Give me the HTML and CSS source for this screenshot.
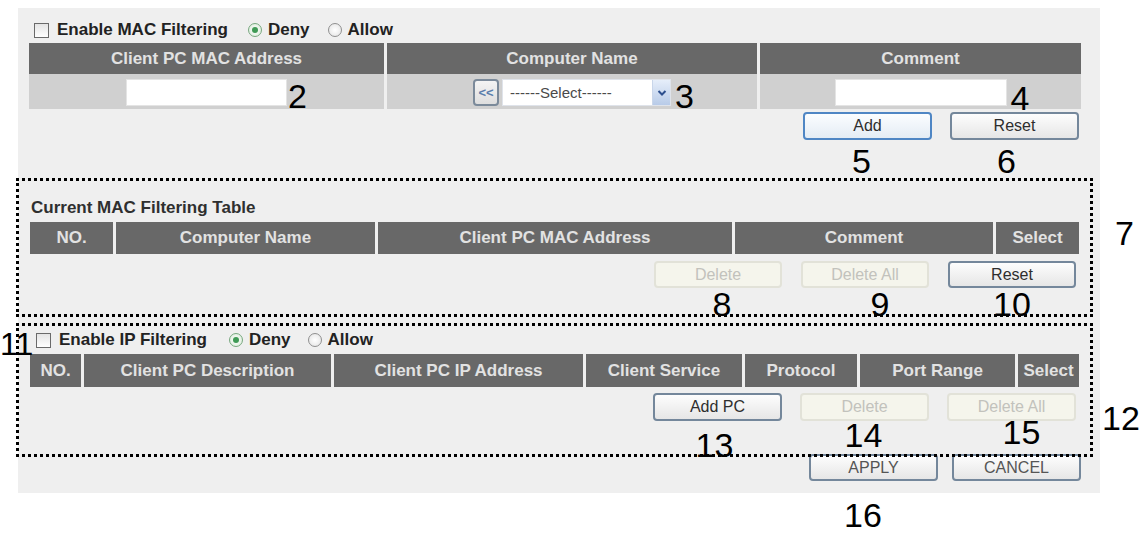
FILE: index.html
```html
<!DOCTYPE html>
<html lang="en">
<head>
    <meta charset="UTF-8">
    <meta name="viewport" content="width=device-width, initial-scale=1.0">
    <title>MAC / IP Filtering</title>
    <link rel="stylesheet" href="styles.css">
</head>
<body>

    <div class="panel">

        <!-- MAC filtering form -->
        <div class="filter-row">
            <span class="check"></span>
            <span class="label">Enable MAC Filtering</span>
            <span class="option"><span class="radio on"></span>Deny</span>
            <span class="option"><span class="radio"></span>Allow</span>
        </div>

        <div class="grid mac-cols head">
            <div>Client PC MAC Address</div>
            <div>Computer Name</div>
            <div>Comment</div>
        </div>
        <div class="grid mac-cols data">
            <div class="cell">
                <span class="field"><input type="text" class="txt mac-input"><span class="mark side">2</span></span>
            </div>
            <div class="cell">
                <span class="field">
                    <button class="copy-btn">&lt;&lt;</button>
                    <span class="select">
                        <span class="select-text">------Select------</span>
                        <span class="select-arrow">
                            <svg width="10" height="8" viewBox="0 0 10 8"><path d="M1.5 2 L5 5.5 L8.5 2" fill="none" stroke="#2d4f8e" stroke-width="2"/></svg>
                        </span>
                    </span>
                    <span class="mark side s3">3</span>
                </span>
            </div>
            <div class="cell">
                <span class="field"><input type="text" class="txt comment-input"><span class="mark side s4">4</span></span>
            </div>
        </div>

        <div class="btn-row add-row">
            <span class="btn-wrap"><button class="btn focus">Add</button><span class="mark below m5">5</span></span>
            <span class="btn-wrap"><button class="btn">Reset</button><span class="mark below m6">6</span></span>
        </div>

        <!-- current MAC table -->
        <div class="box mac-box">
            <span class="mark box-mark m7">7</span>
            <div class="box-title">Current MAC Filtering Table</div>
            <div class="grid list-cols head">
                <div>NO.</div>
                <div>Computer Name</div>
                <div>Client PC MAC Address</div>
                <div>Comment</div>
                <div>Select</div>
            </div>
            <div class="btn-row list-btns">
                <span class="btn-wrap"><button class="btn" disabled>Delete</button><span class="mark below m8">8</span></span>
                <span class="btn-wrap"><button class="btn" disabled>Delete All</button><span class="mark below m9">9</span></span>
                <span class="btn-wrap"><button class="btn">Reset</button><span class="mark below m10">10</span></span>
            </div>
        </div>

        <!-- IP filtering -->
        <div class="box ip-box">
            <span class="mark box-mark m11">11</span>
            <span class="mark box-mark m12">12</span>
            <div class="filter-row ip-row">
                <span class="check"></span>
                <span class="label">Enable IP Filtering</span>
                <span class="option"><span class="radio on"></span>Deny</span>
                <span class="option"><span class="radio"></span>Allow</span>
            </div>
            <div class="grid ip-cols head tall">
                <div>NO.</div>
                <div>Client PC Description</div>
                <div>Client PC IP Address</div>
                <div>Client Service</div>
                <div>Protocol</div>
                <div>Port Range</div>
                <div>Select</div>
            </div>
            <div class="btn-row ip-btns">
                <span class="btn-wrap"><button class="btn">Add PC</button><span class="mark below m13">13</span></span>
                <span class="btn-wrap"><button class="btn" disabled>Delete</button><span class="mark below m14">14</span></span>
                <span class="btn-wrap"><button class="btn" disabled>Delete All</button><span class="mark below m15">15</span></span>
            </div>
        </div>

        <div class="btn-row final-row">
            <span class="btn-wrap"><button class="btn caps">APPLY</button></span>
            <span class="btn-wrap"><button class="btn caps">CANCEL</button></span>
        </div>

    </div>

    <div class="footer-mark">16</div>

</body>
</html>
```

FILE: styles.css
```css
body {
    margin: 0;
    background-color: #fff;
    font-family: "Liberation Sans", Arial, sans-serif;
}
.panel {
    margin: 8px 0 0 18px;
    width: 1082px;
    height: 485px;
    box-sizing: border-box;
    padding: 12px 0 0 11px;
    background-color: #efefef;
}

/* enable + deny/allow line */
.filter-row {
    display: flex;
    align-items: center;
    height: 20px;
    margin: 0 0 3px 5px;
    font-size: 17px;
    font-weight: bold;
    color: #222;
}
.check {
    width: 13px;
    height: 13px;
    border: 1px solid #6a6a6a;
    background: linear-gradient(#e4e4e4, #fff);
    margin-right: 8px;
}
.option {
    display: flex;
    align-items: center;
    margin-left: 20px;
}
.option + .option {
    margin-left: 18px;
}
.radio {
    position: relative;
    width: 12px;
    height: 12px;
    border: 1px solid #8f8f8f;
    border-radius: 50%;
    background: radial-gradient(#fff, #e2e2e2);
    margin-right: 6px;
}
.radio.on {
    border-color: #78a87f;
    background: radial-gradient(#fff, #d8ead8);
}
.radio.on::after {
    content: "";
    position: absolute;
    left: 3px;
    top: 3px;
    width: 6px;
    height: 6px;
    border-radius: 50%;
    background-color: #3f9a55;
}

/* table grids */
.grid {
    display: grid;
    column-gap: 3px;
    width: 1052px;
}
.mac-cols {
    grid-template-columns: 355px 370px 321px;
}
.list-cols {
    width: 1049px;
    grid-template-columns: 83px 259px 354px 258px 83px;
}
.ip-cols {
    width: 1049px;
    grid-template-columns: 51px 247px 249px 156px 112px 155px 61px;
}
.head div {
    height: 31px;
    line-height: 31px;
    background-color: #686868;
    color: #e2e2e2;
    font-size: 17px;
    font-weight: bold;
    text-align: center;
    white-space: nowrap;
}
.list-cols.head div {
    height: 32px;
    line-height: 32px;
}
.head.tall div {
    height: 33px;
    line-height: 33px;
}
.data .cell {
    height: 35px;
    background-color: #d0d0d0;
    display: flex;
    justify-content: center;
    align-items: center;
}
.field {
    position: relative;
    display: flex;
    align-items: center;
    margin-top: 2px;
}
.txt {
    box-sizing: border-box;
    height: 27px;
    border: 1px solid #e4e4e4;
    background-color: #fff;
    padding: 0;
}
.mac-input {
    width: 161px;
}
.comment-input {
    width: 172px;
}
.copy-btn {
    box-sizing: border-box;
    width: 26px;
    height: 27px;
    margin-right: 3px;
    padding: 0;
    border: 2px solid #7b8a9a;
    border-radius: 4px;
    background: linear-gradient(#f4f4f4, #dedede);
    color: #5a7eac;
    font-family: "Liberation Sans", Arial, sans-serif;
    font-size: 13px;
    font-weight: bold;
}
.select {
    box-sizing: border-box;
    display: flex;
    width: 169px;
    height: 27px;
    border: 1px solid #dfe3ea;
    background-color: #fff;
}
.select-text {
    flex: 1;
    padding-left: 7px;
    line-height: 25px;
    font-size: 15px;
    color: #4a4a4a;
}
.select-arrow {
    width: 17px;
    display: flex;
    align-items: center;
    justify-content: center;
    background: linear-gradient(#e6eefa, #b8cbe8);
    border-left: 1px solid #c9d6ea;
}

/* buttons */
.btn-row {
    display: flex;
    justify-content: flex-end;
}
.add-row {
    width: 1050px;
    margin-top: 3px;
    gap: 18px;
}
.btn-wrap {
    position: relative;
    display: flex;
}
.btn {
    box-sizing: border-box;
    width: 129px;
    height: 28px;
    padding: 0;
    border: 2px solid #74879b;
    border-radius: 4px;
    background: linear-gradient(#fdfdfd, #e6e6e6);
    color: #2e2e2e;
    font-family: "Liberation Sans", Arial, sans-serif;
    font-size: 16px;
}
.btn.focus {
    border-color: #4f86c4;
    background: linear-gradient(#fbfdff, #e4ecf4);
}
.btn:disabled {
    border-color: #e2e2d8;
    background: #f5f5ec;
    color: #c2c2bc;
}
.btn.caps {
    height: 27px;
    color: #555;
}

/* dotted boxes */
.box {
    position: relative;
    box-sizing: border-box;
    width: 1077px;
    margin-left: -13px;
    border: 3px dotted #000;
}
.mac-box {
    margin-top: 38px;
    padding: 17px 0 26px 11px;
}
.ip-box {
    z-index: 1;
    margin-top: 6px;
    padding: 4px 0 33px 11px;
}
.box-title {
    height: 20px;
    line-height: 20px;
    margin: 0 0 4px 1px;
    font-size: 17px;
    font-weight: bold;
    color: #2f2f2f;
}
.list-btns {
    width: 1046px;
    margin-top: 7px;
    gap: 19px;
}
.list-btns .btn {
    width: 128px;
    height: 27px;
}
.ip-row {
    margin: 0 0 4px 6px;
}
.ip-row .option {
    margin-left: 22px;
}
.ip-row .option + .option {
    margin-left: 17px;
}
.ip-btns {
    width: 1046px;
    margin-top: 6px;
    gap: 18px;
}
.final-row {
    width: 1052px;
    margin-top: -3px;
    gap: 14px;
}

/* annotation numbers */
.mark {
    position: absolute;
    font-size: 34px;
    line-height: 1;
    color: #000;
    font-weight: normal;
    white-space: nowrap;
}
.side {
    left: calc(100% + 1px);
    top: 0;
}
.side.s3 {
    left: calc(100% + 4px);
}
.side.s4 {
    left: calc(100% + 4px);
    top: 2px;
}
.below {
    top: 100%;
    left: 50%;
    transform: translateX(-50%);
}
.m5 { margin: 4px 0 0 -6px; }
.m6 { margin: 4px 0 0 -8px; }
.m8 { margin: -1px 0 0 4px; }
.m9 { margin: -1px 0 0 15px; }
.m10 { margin: -1px 0 0 0; }
.m13 { margin: 7px 0 0 -3px; }
.m14 { margin: -3px 0 0 -1px; }
.m15 { margin: -6px 0 0 10px; }
.box-mark.m7 {
    left: calc(100% + 25px);
    top: 35px;
}
.box-mark.m11 {
    left: -19px;
    top: 2px;
    font-size: 32px;
}
.box-mark.m12 {
    left: calc(100% + 12px);
    top: 75px;
}

/* "16" below the panel, under APPLY */
.footer-mark {
    padding: 5px 0 0 844px;
    font-size: 34px;
    line-height: 1;
    color: #000;
}
```
